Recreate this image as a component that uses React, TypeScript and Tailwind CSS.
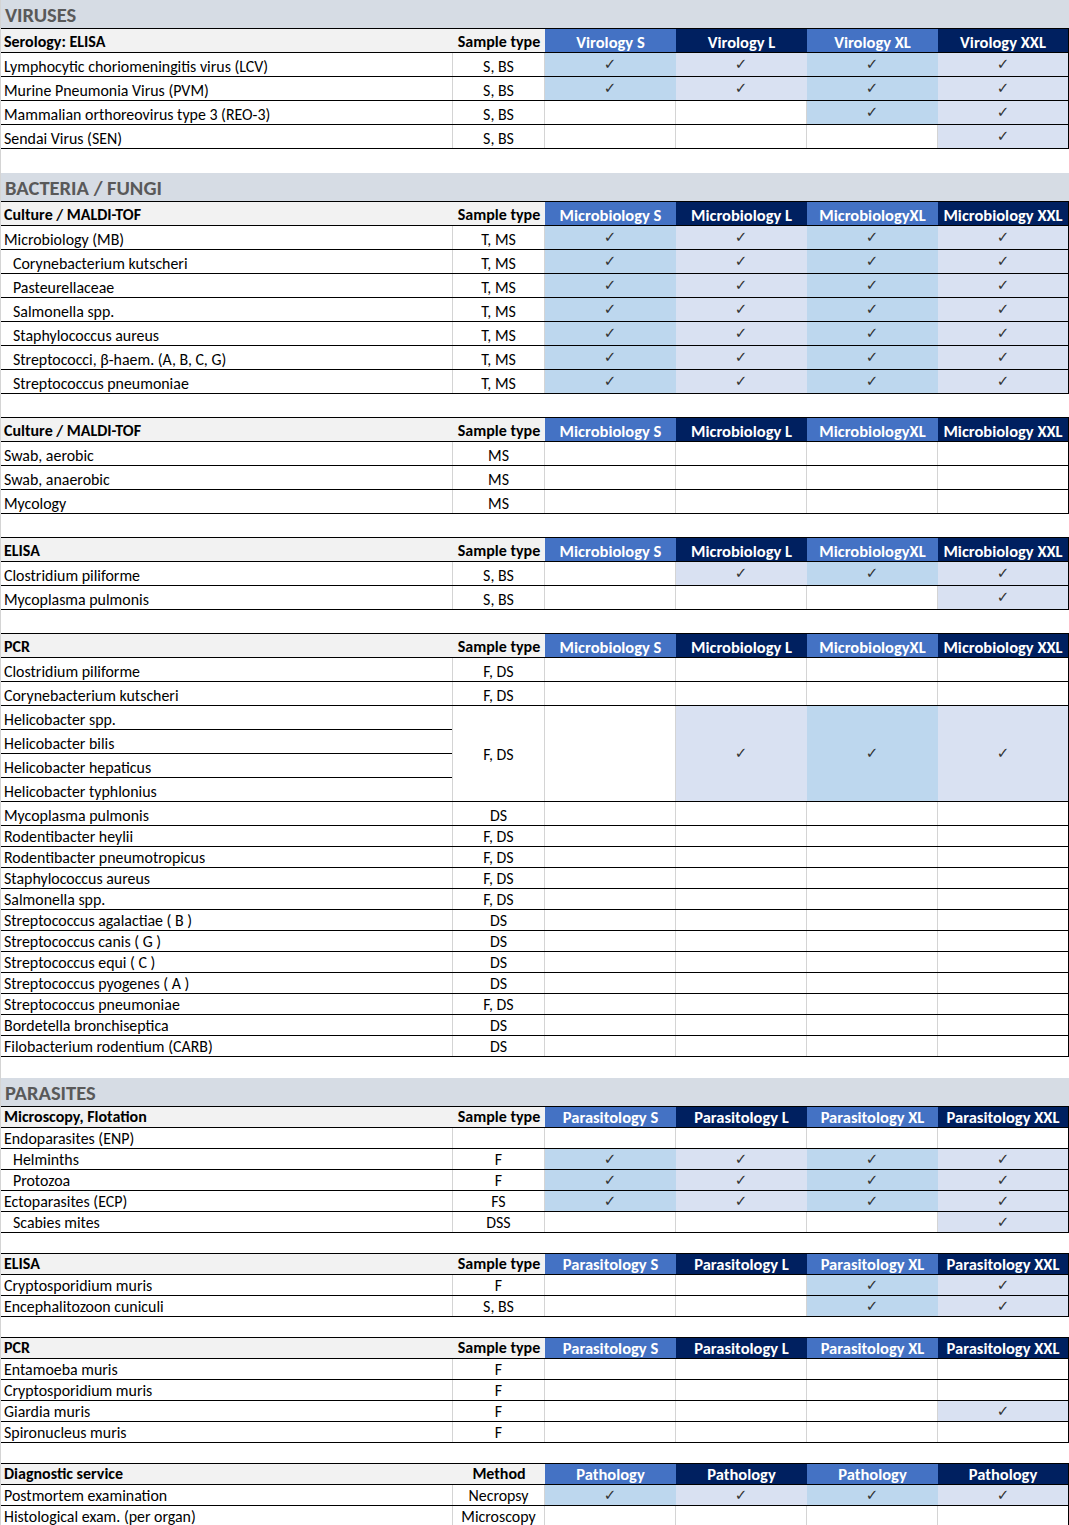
import React from 'react'

type Checks = [boolean, boolean, boolean, boolean]

interface Row {
  name: string
  sample: string
  checks: Checks
  indent?: boolean
}

const GRID = 'grid grid-cols-[452px_92px_131px_131px_131px_131px]'
const FILL = ['bg-[#BDD7EE]', 'bg-[#D9E1F2]', 'bg-[#BDD7EE]', 'bg-[#D9E1F2]']
const HEAD = ['bg-[#4472C4]', 'bg-[#002060]', 'bg-[#4472C4]', 'bg-[#002060]']

const all: Checks = [true, true, true, true]
const none: Checks = [false, false, false, false]
const xxl: Checks = [false, false, false, true]
const xlxxl: Checks = [false, false, true, true]
const lxlxxl: Checks = [false, true, true, true]

const micro = ['Microbiology S', 'Microbiology L', 'MicrobiologyXL', 'Microbiology XXL']
const para = ['Parasitology S', 'Parasitology L', 'Parasitology XL', 'Parasitology XXL']

function Check() {
  return <span className="font-['DejaVu_Sans',sans-serif] text-[15px] leading-none text-[#333]">✓</span>
}

function TitleRow({ title }: { title: string }) {
  return (
    <div className="flex h-[28px] items-end bg-[#D6DCE4] pb-[3px] pl-[4px] text-[20.5px] font-bold text-[#595959]">
      {title}
    </div>
  )
}

function HeaderRow({ title, sample, cols, h }: { title: string; sample: string; cols: string[]; h: string }) {
  return (
    <div className={`${GRID} ${h} border-y border-black text-[16px] font-bold`}>
      <div className="flex items-end bg-[#F2F2F2] pb-[2px] pl-[3px] text-black">{title}</div>
      <div className="flex items-end justify-center bg-[#F2F2F2] pb-[2px] text-black">{sample}</div>
      {cols.map((c, i) => (
        <div key={i} className={`flex items-end justify-center whitespace-nowrap pb-[2px] text-[16.5px] text-white ${HEAD[i]} ${i === 3 ? 'border-r border-black' : ''}`}>
          {c}
        </div>
      ))}
    </div>
  )
}

function CheckCells({ checks }: { checks: Checks }) {
  return (
    <>
      {checks.map((c, i) => (
        <div
          key={i}
          className={`flex items-center justify-center border-r ${i === 3 ? 'border-black' : c ? 'border-transparent' : 'border-[#D4D4D4]'} ${c ? FILL[i] : ''}`}
        >
          {c && <Check />}
        </div>
      ))}
    </>
  )
}

function DataRow({ r, h }: { r: Row; h: string }) {
  return (
    <div className={`${GRID} ${h} border-b border-black`}>
      <div className={`flex items-end border-r border-[#D4D4D4] pb-px ${r.indent ? 'pl-[12px]' : 'pl-[3px]'}`}>{r.name}</div>
      <div className="flex items-end justify-center border-r border-[#D4D4D4] pb-px">{r.sample}</div>
      <CheckCells checks={r.checks} />
    </div>
  )
}

function Blank({ h }: { h: string }) {
  return <div className={h} />
}

const virusRows: Row[] = [
  { name: 'Lymphocytic choriomeningitis virus (LCV)', sample: 'S, BS', checks: all },
  { name: 'Murine Pneumonia Virus (PVM)', sample: 'S, BS', checks: all },
  { name: 'Mammalian orthoreovirus type 3 (REO-3)', sample: 'S, BS', checks: xlxxl },
  { name: 'Sendai Virus (SEN)', sample: 'S, BS', checks: xxl },
]

const cultureRows: Row[] = [
  { name: 'Microbiology (MB)', sample: 'T, MS', checks: all },
  { name: 'Corynebacterium kutscheri', sample: 'T, MS', checks: all, indent: true },
  { name: 'Pasteurellaceae', sample: 'T, MS', checks: all, indent: true },
  { name: 'Salmonella spp.', sample: 'T, MS', checks: all, indent: true },
  { name: 'Staphylococcus aureus', sample: 'T, MS', checks: all, indent: true },
  { name: 'Streptococci, β-haem. (A, B, C, G)', sample: 'T, MS', checks: all, indent: true },
  { name: 'Streptococcus pneumoniae', sample: 'T, MS', checks: all, indent: true },
]

const swabRows: Row[] = [
  { name: 'Swab, aerobic', sample: 'MS', checks: none },
  { name: 'Swab, anaerobic', sample: 'MS', checks: none },
  { name: 'Mycology', sample: 'MS', checks: none },
]

const bactElisa: Row[] = [
  { name: 'Clostridium piliforme', sample: 'S, BS', checks: lxlxxl },
  { name: 'Mycoplasma pulmonis', sample: 'S, BS', checks: xxl },
]

const pcrTop: Row[] = [
  { name: 'Clostridium piliforme', sample: 'F, DS', checks: none },
  { name: 'Corynebacterium kutscheri', sample: 'F, DS', checks: none },
]

const pcrRest: Row[] = [
  { name: 'Rodentibacter heylii', sample: 'F, DS', checks: none },
  { name: 'Rodentibacter pneumotropicus', sample: 'F, DS', checks: none },
  { name: 'Staphylococcus aureus', sample: 'F, DS', checks: none },
  { name: 'Salmonella spp.', sample: 'F, DS', checks: none },
  { name: 'Streptococcus agalactiae ( B )', sample: 'DS', checks: none },
  { name: 'Streptococcus canis ( G )', sample: 'DS', checks: none },
  { name: 'Streptococcus equi ( C )', sample: 'DS', checks: none },
  { name: 'Streptococcus pyogenes ( A )', sample: 'DS', checks: none },
  { name: 'Streptococcus pneumoniae', sample: 'F, DS', checks: none },
  { name: 'Bordetella bronchiseptica', sample: 'DS', checks: none },
  { name: 'Filobacterium rodentium (CARB)', sample: 'DS', checks: none },
]

const helico = ['Helicobacter spp.', 'Helicobacter bilis', 'Helicobacter hepaticus', 'Helicobacter typhlonius']

const microscopyRows: Row[] = [
  { name: 'Endoparasites (ENP)', sample: '', checks: none },
  { name: 'Helminths', sample: 'F', checks: all, indent: true },
  { name: 'Protozoa', sample: 'F', checks: all, indent: true },
  { name: 'Ectoparasites (ECP)', sample: 'FS', checks: all },
  { name: 'Scabies mites', sample: 'DSS', checks: xxl, indent: true },
]

const paraElisa: Row[] = [
  { name: 'Cryptosporidium muris', sample: 'F', checks: xlxxl },
  { name: 'Encephalitozoon cuniculi', sample: 'S, BS', checks: xlxxl },
]

const paraPcr: Row[] = [
  { name: 'Entamoeba muris', sample: 'F', checks: none },
  { name: 'Cryptosporidium muris', sample: 'F', checks: none },
  { name: 'Giardia muris', sample: 'F', checks: xxl },
  { name: 'Spironucleus muris', sample: 'F', checks: none },
]

const pathoRows: Row[] = [
  { name: 'Postmortem examination', sample: 'Necropsy', checks: all },
  { name: 'Histological exam. (per organ)', sample: 'Microscopy', checks: none },
]

export default function App() {
  return (
    <div className="w-[1069px] border-l border-[#D4D4D4] bg-white font-[Carlito,Lato,sans-serif] text-[15.9px] leading-none text-black">
      <TitleRow title="VIRUSES" />
      <HeaderRow title="Serology: ELISA" sample="Sample type" cols={['Virology S', 'Virology L', 'Virology XL', 'Virology XXL']} h="h-[25px]" />
      {virusRows.map((r, i) => <DataRow key={i} r={r} h="h-[24px]" />)}
      <Blank h="h-[24px]" />

      <TitleRow title="BACTERIA / FUNGI" />
      <HeaderRow title="Culture / MALDI-TOF" sample="Sample type" cols={micro} h="h-[25px]" />
      {cultureRows.map((r, i) => <DataRow key={i} r={r} h="h-[24px]" />)}
      <Blank h="h-[23px]" />

      <HeaderRow title="Culture / MALDI-TOF" sample="Sample type" cols={micro} h="h-[25px]" />
      {swabRows.map((r, i) => <DataRow key={i} r={r} h="h-[24px]" />)}
      <Blank h="h-[23px]" />

      <HeaderRow title="ELISA" sample="Sample type" cols={micro} h="h-[25px]" />
      {bactElisa.map((r, i) => <DataRow key={i} r={r} h="h-[24px]" />)}
      <Blank h="h-[23px]" />

      <HeaderRow title="PCR" sample="Sample type" cols={micro} h="h-[25px]" />
      {pcrTop.map((r, i) => <DataRow key={i} r={r} h="h-[24px]" />)}
      <div className={`${GRID} h-[96px] border-b border-black`}>
        <div className="flex flex-col border-r border-[#D4D4D4]">
          {helico.map((n, i) => (
            <div key={n} className={`flex items-end pb-px pl-[3px] ${i < 3 ? 'h-[24px] border-b border-black' : 'h-[23px]'}`}>
              {n}
            </div>
          ))}
        </div>
        <div className="flex items-center justify-center border-r border-[#D4D4D4] pt-[3px]">F, DS</div>
        <CheckCells checks={lxlxxl} />
      </div>
      <DataRow r={{ name: 'Mycoplasma pulmonis', sample: 'DS', checks: none }} h="h-[24px]" />
      {pcrRest.map((r, i) => <DataRow key={i} r={r} h="h-[21px]" />)}
      <Blank h="h-[21px]" />

      <TitleRow title="PARASITES" />
      <HeaderRow title="Microscopy, Flotation" sample="Sample type" cols={para} h="h-[22px]" />
      {microscopyRows.map((r, i) => <DataRow key={i} r={r} h="h-[21px]" />)}
      <Blank h="h-[20px]" />

      <HeaderRow title="ELISA" sample="Sample type" cols={para} h="h-[22px]" />
      {paraElisa.map((r, i) => <DataRow key={i} r={r} h="h-[21px]" />)}
      <Blank h="h-[20px]" />

      <HeaderRow title="PCR" sample="Sample type" cols={para} h="h-[22px]" />
      {paraPcr.map((r, i) => <DataRow key={i} r={r} h="h-[21px]" />)}
      <Blank h="h-[20px]" />

      <HeaderRow title="Diagnostic service" sample="Method" cols={['Pathology', 'Pathology', 'Pathology', 'Pathology']} h="h-[22px]" />
      {pathoRows.map((r, i) => <DataRow key={i} r={r} h="h-[21px]" />)}
    </div>
  )
}
